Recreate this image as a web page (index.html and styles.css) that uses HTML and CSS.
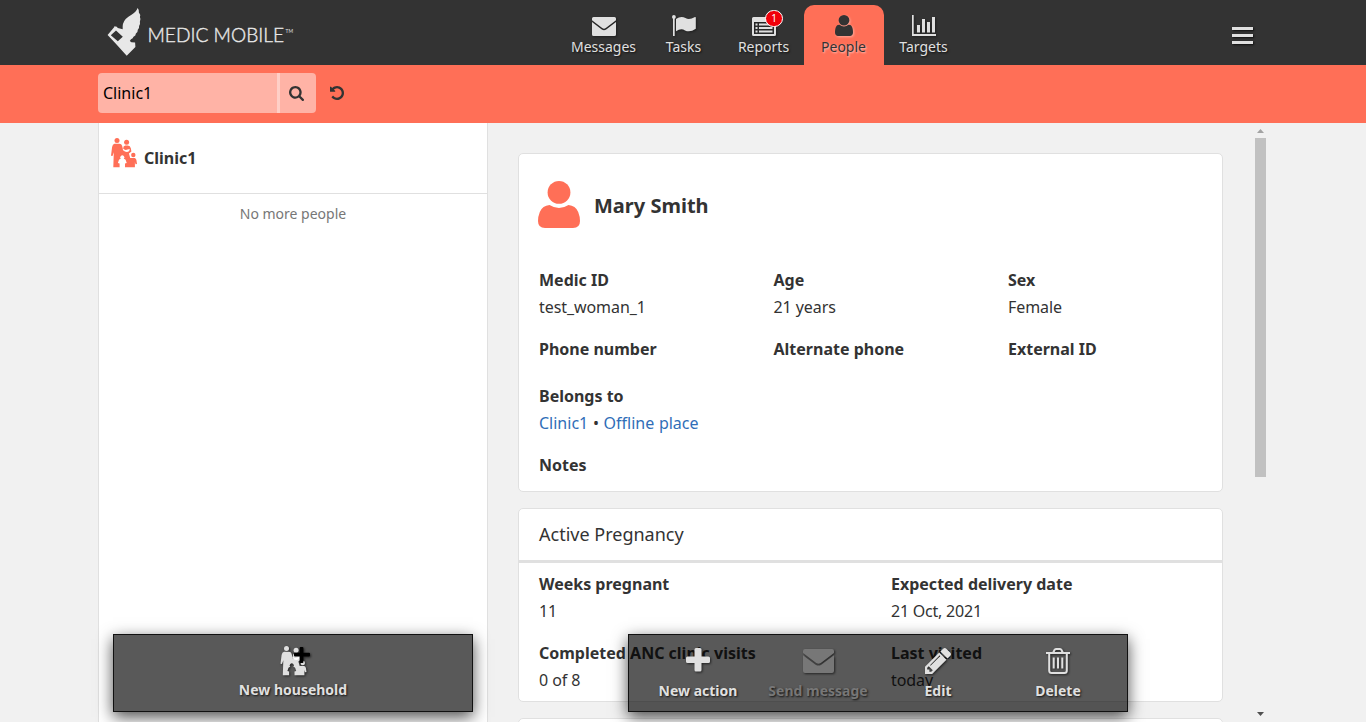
FILE: index.html
```html
<!DOCTYPE html>
<html lang="en">
<head>
<meta charset="utf-8">
<title>Medic Mobile</title>
<link rel="stylesheet" href="styles.css">
</head>
<body>
<svg class="defs" width="0" height="0">
  <symbol id="user" viewBox="256 128 1280 1536" preserveAspectRatio="none"><path d="M1536 1399q0 109-62.500 187t-150.500 78h-854q-88 0-150.500-78t-62.500-187q0-85 8.500-160.500t31.500-152 58.500-131 94-89 134.500-34.500q131 128 313 128t313-128q76 0 134.500 34.500t94 89 58.500 131 31.500 152 8.500 160.500zm-256-887q0 159-112.500 271.500t-271.500 112.500-271.500-112.500-112.500-271.500 112.500-271.500 271.500-112.500 271.500 112.500 112.500 271.500z"/></symbol>
  <symbol id="envelope" viewBox="0 0 24 19" preserveAspectRatio="none"><path d="M1.500 0h21Q24 0 24 1.500v1.700L13.800 11q-1.800 1.300-3.600 0L0 3.200V1.500Q0 0 1.500 0zM0 5l9.800 7.400q2.200 1.500 4.400 0L24 5v12.500q0 1.500-1.500 1.500h-21Q0 19 0 17.500z"/></symbol>
  <symbol id="family" viewBox="0 0 26 30">
    <circle cx="6" cy="2.600" r="2.500"/><circle cx="15.600" cy="4.300" r="2.500"/><circle cx="22.300" cy="17" r="2.200"/>
    <path fill-rule="evenodd" d="M3.500 5.800h5q2 0 2.600 2l1.100 4.500 1 .6-1-2.300q-.2-2.800 2-3.100h2.600q2.500.2 3.100 3l.5 3-2.500 2 1.300 4.500h4.500q1.400.3 1.700 2l.6 4-1.500.3-.6-2.300v5.300H14v-3.800l1.700-.5-1-3q-.5-1-1.500-1h-.4a2.100 2.100 0 1 0-3 0h-.4q-1 0-1.500 1l-1 3 1.700.5v3.800H2.300l.5-15L1.500 18 0 17.700 1.100 9q.5-2.900 2.400-3.200z"/>
    <path class="swaddle" d="M11.500 11.300l1.300-.4q1.300 1.600 3.700.7l2.300-.6-.6 2.100q-1.700 1.500-4.400.5z"/>
  </symbol>
</svg>
<header class="header">
  <div class="container header-row">
    <svg class="logo" width="200" height="60" viewBox="98 0 200 60" role="img" aria-label="Medic Mobile">
      <path class="mark" fill-rule="evenodd" d="M137.600 8q1.800 2 1.300 4.500 1.900 2 1 4.600 1.200 2.300 0 4.600.6 2.300-.8 4.200.4 2.300-1.300 3.800.2 2.300-1.900 3.700 0 2.300-2.400 3.300-.4 1.700-2.500 2.500l-1.200 1.700 1.600 1.300 3.700.3.300 4.600-8.700 8.700-11.300-12.500-7.800-8.300 6.700-8v-.800l2.500.5 1 1.400 4.900 1.200q-.6-6.200 3-10.200 2.500-2.600 5.800-4.300 4.600-2.700 6.100-6.800zM116 30.600l-5.200 4.700 7 6 5-4.500z"/>
      <text class="wordmark" x="147.500" y="42.300" textLength="136.500" lengthAdjust="spacingAndGlyphs">MEDIC MOBILE</text>
      <text class="trademark" x="285.500" y="32.500" textLength="7.500" lengthAdjust="spacingAndGlyphs">TM</text>
    </svg>
    <nav class="tabs">
      <a class="tab"><svg width="24" height="19"><use href="#envelope"/></svg><span>Messages</span></a>
      <a class="tab"><svg width="24" height="21" viewBox="0 0 24 21"><circle cx="1.900" cy="1.900" r="1.900"/><path d="M1 2h1.700v19H1zM4 4q5-3.400 9.500-.9 3.700 2.200 9.500-1 .8-.3.800.6v11q-5.800 4.100-10.800 1.700-4-2.400-9 .8z"/></svg><span>Tasks</span></a>
      <a class="tab"><svg width="24" height="19" viewBox="0 0 24 19"><path fill-rule="evenodd" d="M1.500 0h21Q24 0 24 1.500v16q0 1.500-1.500 1.500h-21Q0 19 0 17.500v-16Q0 0 1.500 0zM2 5v12h20V5zM3.500 6.500h2v2h-2zm3.500 0h13.500v2H7zM3.500 10h2v2h-2zM7 10h13.500v2H7zm-3.500 3.500h2v2h-2zm3.500 0h13.500v2H7z"/></svg><span>Reports</span><b class="badge">1</b></a>
      <a class="tab selected"><svg width="18" height="21"><use href="#user"/></svg><span>People</span></a>
      <a class="tab"><svg width="24" height="21" viewBox="0 0 24 21"><path d="M0 0h1.700v19H24v2H0zM5 10h3v7.500H5zM10 4h3v13.500h-3zM15 7h3v10.500h-3zM20 2h3v15.500h-3z"/></svg><span>Targets</span></a>
    </nav>
    <div class="menu"><i></i><i></i><i></i></div>
  </div>
</header>
<div class="filters">
  <div class="container filter-row">
    <input class="search" type="text" value="Clinic1">
    <button class="search-button"><svg width="15" height="15" viewBox="64 128 1664 1664"><path d="M1216 832q0-185-131.500-316.500t-316.500-131.500-316.500 131.500-131.500 316.500 131.500 316.500 316.500 131.500 316.500-131.500 131.500-316.500zm512 832q0 52-38 90t-90 38q-54 0-90-38l-343-342q-179 124-399 124-143 0-273.500-55.500t-225-150-150-225-55.500-273.500 55.500-273.500 150-225 225-150 273.500-55.500 273.500 55.500 225 150 150 225 55.500 273.500q0 220-124 399l343 343q37 37 37 90z"/></svg></button>
    <svg class="reset" width="14" height="14" viewBox="128 128 1536 1536"><path d="M1664 896q0 156-61 298t-164 245-245 164-298 61q-172 0-327-72.500t-264-204.500q-7-10-6.500-22.500t8.500-20.500l137-138q10-9 25-9 16 2 23 12 73 95 179 147t225 52q104 0 198.500-40.500t163.500-109.500 109.500-163.500 40.500-198.500-40.500-198.500-109.500-163.500-163.500-109.500-198.500-40.500q-98 0-188 35.500t-160 101.500l137 138q31 30 14 69-17 40-59 40h-448q-26 0-45-19t-19-45v-448q0-42 40-59 39-17 69 14l130 129q107-101 244.500-156.500t284.500-55.500q156 0 298 61t245 164 164 245 61 298z"/></svg>
  </div>
</div>
<main class="container main">
  <aside class="list">
    <div class="list-item"><svg width="26" height="30"><use href="#family"/></svg><strong>Clinic1</strong></div>
    <p class="list-end">No more people</p>
    <div class="actions list-actions">
      <a class="action"><span class="action-icon household"><svg width="27" height="30"><use href="#family"/></svg><svg class="add" width="16" height="16" viewBox="0 0 17 17"><path d="M6 1q0-1 1-1h2q1 0 1 1v5h6q1 0 1 1v2q0 1-1 1h-6v6q0 1-1 1H7q-1 0-1-1v-6H1q-1 0-1-1V7q0-1 1-1h5z"/></svg></span><span>New household</span></a>
    </div>
  </aside>
  <section class="content">
    <div class="cards">
      <article class="card profile">
        <div class="person"><svg width="42" height="47" viewBox="0 0 42 47"><circle cx="21" cy="11.400" r="11.400"/><path d="M11.500 24q9.500 6 19 0 7 .500 9.700 7 1.800 4.500 1.800 9 0 7-7 7H7q-7 0-7-7 0-4.500 1.800-9 2.700-6.500 9.700-7z"/></svg><h1>Mary Smith</h1></div>
        <dl class="fields thirds">
          <div class="id-row"><dt>Medic ID</dt><dd>test_woman_1</dd></div>
          <div class="id-row"><dt>Age</dt><dd>21 years</dd></div>
          <div class="id-row"><dt>Sex</dt><dd>Female</dd></div>
          <div class="phone-row"><dt>Phone number</dt></div>
          <div class="phone-row"><dt>Alternate phone</dt></div>
          <div class="phone-row"><dt>External ID</dt></div>
          <div class="full"><dt>Belongs to</dt><dd class="lineage"><a>Clinic1</a> • <a>Offline place</a></dd></div>
          <div class="full"><dt>Notes</dt></div>
        </dl>
      </article>
      <article class="card pregnancy">
        <h2>Active Pregnancy</h2>
        <dl class="fields halves">
          <div><dt>Weeks pregnant</dt><dd>11</dd></div>
          <div><dt>Expected delivery date</dt><dd class="date">21 Oct, 2021</dd></div>
          <div><dt>Completed ANC clinic visits</dt><dd>0 of 8</dd></div>
          <div><dt>Last visited</dt><dd>today</dd></div>
        </dl>
      </article>
      <article class="card next"></article>
    </div>
    <div class="scrollbar"><svg width="7" height="4" viewBox="0 0 7 4"><path d="M3.500 0L7 4H0z"/></svg><div class="thumb"></div><svg class="down" width="7" height="4" viewBox="0 0 7 4"><path d="M0 0h7L3.500 4z"/></svg></div>
    <div class="actions content-actions">
      <a class="action"><span class="action-icon"><svg width="24" height="24" viewBox="0 0 24 24"><path d="M8.500 1.500Q8.500 0 10 0h4q1.500 0 1.500 1.500v7h7q1.500 0 1.500 1.500v3.500q0 1.500-1.500 1.500h-7v7q0 1.500-1.500 1.500h-4q-1.500 0-1.500-1.500v-7h-7Q0 15 0 13.500V10q0-1.500 1.500-1.500h7z"/></svg></span><span>New action</span></a>
      <a class="action disabled"><span class="action-icon"><svg class="send" width="31" height="24" viewBox="0 0 31 24"><use href="#envelope" width="31" height="24"/></svg></span><span>Send message</span></a>
      <a class="action"><span class="action-icon"><svg width="26" height="26" viewBox="128 149 1515 1515"><path d="M491 1536l91-91-235-235-91 91v107h128v128h107zm523-928q0-22-22-22-10 0-17 7l-542 542q-7 7-7 17 0 22 22 22 10 0 17-7l542-542q7-7 7-17zm-54-192l416 416-832 832h-416v-416zm683 96q0 53-37 90l-166 166-416-416 166-165q36-38 90-38 53 0 91 38l235 234q37 39 37 91z"/></svg></span><span>Edit</span></a>
      <a class="action"><span class="action-icon"><svg class="line-icon" width="24" height="26" viewBox="0 0 24 26"><path d="M0 5h24M7 5l1.500-3q.4-1 1.500-1h4q1.100 0 1.500 1L17 5M3.200 5v17.500q0 2.500 2.500 2.500h12.600q2.500 0 2.500-2.500V5M7.700 9.500v11M12 9.500v11M16.300 9.500v11"/></svg></span><span>Delete</span></a>
    </div>
  </section>
</main>
</body>
</html>
```
FILE: styles.css
```css
* { box-sizing: border-box; }
body {
  margin: 0;
  height: 722px;
  overflow: hidden;
  background: #f1f1f1;
  color: #333;
  font: 16px/27px "Noto Sans", sans-serif;
}
svg { display: block; fill: currentColor; }
.defs { position: absolute; }
.container { width: 1170px; margin: 0 auto; }

.header { height: 65px; background: #333; color: #e0e0e0; }
.header-row { display: flex; height: 65px; }
.logo { width: 200px; height: 60px; flex: none; }
.mark { fill: #e8e8e8; }
.wordmark { font: 300 20px Lato, sans-serif; fill: #e8e8e8; stroke: #e8e8e8; stroke-width: .4px; }
.trademark { font: 5.500px Lato, sans-serif; fill: #e0e0e0; }
.tabs { display: flex; margin: 5px 0 0 266px; }
.tab {
  position: relative;
  width: 80px;
  height: 60px;
  padding: 10px 1px 0 0;
  display: flex;
  flex-direction: column;
  align-items: center;
  font-size: 14px;
  line-height: 20px;
  text-shadow: 1px 1px 2px rgba(0, 0, 0, .7);
}
.tab svg { filter: drop-shadow(1px 1px 1px rgba(0, 0, 0, .4)); height: 21px; margin-bottom: 1px; }
.tab:nth-child(1) svg, .tab:nth-child(3) svg { height: 19px; margin: 2px 0 1px; }
.selected {
  background: #ff6f57;
  color: #333;
  border-radius: 10px 10px 0 0;
  text-shadow: 1px 1px 2px rgba(255, 255, 255, .6);
}
.tab.selected svg { filter: drop-shadow(1px 1px 1px rgba(255, 255, 255, .4)); }
.badge {
  position: absolute;
  top: 5px;
  left: 41px;
  width: 18px;
  height: 17px;
  border: 1px solid #fff;
  border-radius: 9px;
  background: #f0000a;
  color: #fff;
  font-size: 10px;
  font-weight: 400;
  line-height: 15px;
  text-align: center;
  text-shadow: none;
}
.menu { display: flex; flex-direction: column; gap: 4px; margin: 27px 0 0 268px; }
.menu i { width: 21px; height: 3px; background: #e0e0e0; box-shadow: 1px 1px 2px #111; }

.filters { height: 58px; background: #ff6f57; }
.filter-row { display: flex; align-items: center; padding-top: 8px; }
.search {
  width: 182px;
  height: 40px;
  padding: 0 5px;
  border: 0;
  border-right: 3px solid #ffcfc7;
  border-radius: 4px 0 0 4px;
  background: #ffb3a6;
  color: #000;
  font: 16px "Noto Sans", sans-serif;
}
.search-button {
  width: 36px;
  height: 40px;
  padding: 1px 0 0 9px;
  border: 0;
  border-radius: 0 4px 4px 0;
  background: #ffb3a6;
  color: #333;
}
.reset { margin-left: 14px; }

.main { display: flex; height: 599px; }
.list {
  position: relative;
  width: 390px;
  background: #fff;
  border: solid #e0e0e0;
  border-width: 0 1px;
}
.list-item {
  display: flex;
  gap: 7px;
  height: 71px;
  padding: 15px 12px 0;
  border-bottom: 1px solid #e0e0e0;
  color: #ff6f57;
}
.list-item strong { padding-top: 7px; color: #333; }
.list-end { margin: 6px 0 0; color: #777; font-size: 14px; text-align: center; }
.swaddle { fill: #fff; }

.content { position: relative; display: flex; width: 780px; height: 599px; overflow: hidden; }
.cards { width: 705px; margin: 30px 32px 0 30px; }
.card { border: 1px solid #e0e0e0; border-radius: 5px; background: #fff; }
.profile { height: 339px; margin-bottom: 16px; }
.person { display: flex; gap: 14px; height: 113px; padding: 27px 0 0 19px; color: #ff6f57; }
h1 { margin: 11px 0 0; color: #333; font-size: 20px; line-height: 28px; }
h2 { margin: 0; height: 54px; padding: 12px 20px; border-bottom: 3px solid #e0e0e0; font-size: 18px; font-weight: 400; }
.fields { display: grid; margin: 0; }
.fields > div { padding: 0 20px; }
.thirds { grid-template-columns: repeat(3, 234.500px); }
.halves { grid-template-columns: repeat(2, 352px); padding-top: 8px; }
.halves > div { height: 69px; }
dt { font-weight: 700; }
dd { margin: 0; letter-spacing: -.07px; }
dd a { color: #306eb8; }
.lineage { letter-spacing: 0; word-spacing: .5px; }
.date { letter-spacing: -.22px; }
.id-row { height: 69px; }
.phone-row { height: 47px; }
.full { grid-column: 1 / -1; height: 69px; }
.full:last-child { height: 27px; }
.pregnancy { height: 194px; margin-bottom: 16px; }
.next { height: 60px; }

.scrollbar { width: 11px; padding-top: 6px; display: flex; flex-direction: column; align-items: center; color: #a3a3a3; }
.thumb { width: 11px; height: 339px; margin-top: 5px; background: #c1c1c1; }
.down { margin-top: 235px; color: #505050; }

.actions {
  position: absolute;
  display: flex;
  justify-content: center;
  height: 78px;
  border: 1px solid #111;
  background: rgba(0, 0, 0, .65);
  box-shadow: 0 5px 15px rgba(0, 0, 0, .7);
  color: #e0e0e0;
}
.list-actions { left: 14px; top: 511px; width: 360px; }
.content-actions { left: 140px; top: 511px; width: 500px; }
.action {
  display: flex;
  flex-direction: column;
  align-items: center;
  width: 120px;
  padding-top: 12px;
  font-size: 14px;
  font-weight: 700;
  line-height: 20px;
  text-shadow: 1px 1px 2px rgba(0, 0, 0, .8);
  white-space: nowrap;
}
.action-icon { position: relative; height: 34px; padding-top: 1px; filter: drop-shadow(1px 1px 1px rgba(0, 0, 0, .6)); }
.household { height: 33px; padding-top: 0; margin-top: -1px; margin-bottom: 1px; }
.household .swaddle { fill: #595959; }
.add { position: absolute; left: 14px; top: 1px; color: #000; }
.send { margin-top: 1px; }
.disabled { color: #777; }
.line-icon { fill: none; stroke: currentColor; stroke-width: 2px; }
```
